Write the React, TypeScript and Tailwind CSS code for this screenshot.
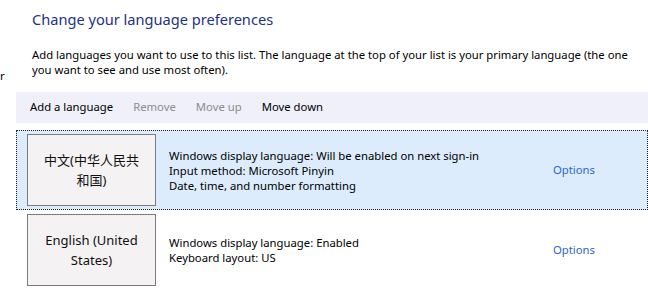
const FONT = { fontFamily: '"Noto Sans", "Noto Sans CJK SC", sans-serif' };

const languages = [
  {
    name: "中文(中华人民共和国)",
    lines: [
      "Windows display language: Will be enabled on next sign-in",
      "Input method: Microsoft Pinyin",
      "Date, time, and number formatting",
    ],
    selected: true,
  },
  {
    name: "English (United States)",
    lines: ["Windows display language: Enabled", "Keyboard layout: US"],
    selected: false,
  },
];

function LanguageRow({ name, lines, selected }: { name: string; lines: string[]; selected: boolean }) {
  return (
    <div
      className={`flex h-[80px] items-center border border-dotted ${
        selected ? "border-[#222] bg-[#dcecfc]" : "border-transparent bg-white"
      }`}
    >
      <div className="ml-[10px] flex h-[72px] w-[129px] shrink-0 items-center justify-center border border-[#7b7b7b] bg-[#f4f2f2] px-[10px] text-center text-[13px] leading-[20px] text-[#111]">
        {name}
      </div>
      <div className="ml-[13px] flex-1 text-[11.3px] leading-[15px] text-black">
        {lines.map((l) => (
          <div key={l}>{l}</div>
        ))}
      </div>
      <div className="w-[94px] shrink-0 text-[11.3px] text-[#2f66c4]">Options</div>
    </div>
  );
}

export default function App() {
  return (
    <div className="flex h-[307px] w-[648px] overflow-hidden bg-white" style={FONT}>
      <div className="w-[16px] shrink-0 overflow-hidden pt-[68px] text-[11.3px] text-black">r</div>
      <div className="w-[632px] shrink-0">
        <h1 className="ml-[16px] mt-[8px] text-[14.6px] leading-[22px] font-normal text-[#1e3287]">
          Change your language preferences
        </h1>
        <p className="ml-[16px] mt-[17px] w-[600px] text-[11.3px] leading-[15px] text-black">
          Add languages you want to use to this list. The language at the top of your list is your primary
          language (the one you want to see and use most often).
        </p>
        <div className="mt-[15px] flex h-[31px] items-center gap-[20px] bg-[#eff0fa] pl-[14px] text-[11.3px]">
          <span className="text-black">Add a language</span>
          <span className="text-[#8d8d8d]">Remove</span>
          <span className="text-[#8d8d8d]">Move up</span>
          <span className="text-black">Move down</span>
        </div>
        <div className="mt-[7px] flex flex-col">
          {languages.map((lang) => (
            <LanguageRow key={lang.name} {...lang} />
          ))}
        </div>
      </div>
    </div>
  );
}
